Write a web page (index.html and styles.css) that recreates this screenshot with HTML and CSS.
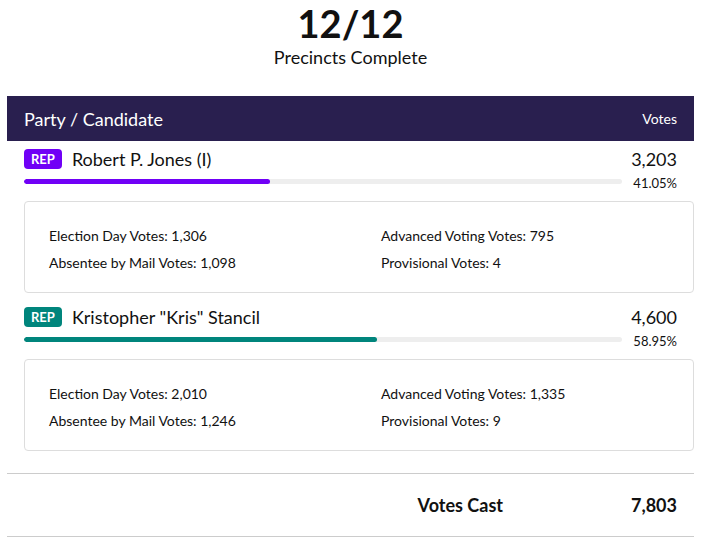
FILE: index.html
```html
<!DOCTYPE html>
<html lang="en">
<head>
    <meta charset="UTF-8">
    <meta name="viewport" content="width=device-width, initial-scale=1.0">
    <title>Election Results</title>
    <link rel="stylesheet" href="styles.css">
</head>
<body>

<div class="results">
    <div class="summary">
        <div class="precincts">12/12</div>
        <div class="precincts-label">Precincts Complete</div>
    </div>

    <div class="table-head">
        <span class="head-title">Party / Candidate</span>
        <span class="head-votes">Votes</span>
    </div>

    <div class="candidate">
        <div class="cand-row">
            <span class="badge badge-purple">REP</span>
            <span class="cand-name">Robert P. Jones (I)</span>
            <span class="cand-votes">3,203</span>
        </div>
        <div class="bar-row">
            <div class="bar"><div class="bar-fill fill-purple" style="width: 41.05%"></div></div>
            <span class="pct">41.05%</span>
        </div>
        <div class="details">
            <span>Election Day Votes: 1,306</span>
            <span>Advanced Voting Votes: 795</span>
            <span>Absentee by Mail Votes: 1,098</span>
            <span>Provisional Votes: 4</span>
        </div>
    </div>

    <div class="candidate">
        <div class="cand-row">
            <span class="badge badge-teal">REP</span>
            <span class="cand-name">Kristopher "Kris" Stancil</span>
            <span class="cand-votes">4,600</span>
        </div>
        <div class="bar-row">
            <div class="bar"><div class="bar-fill fill-teal" style="width: 58.95%"></div></div>
            <span class="pct">58.95%</span>
        </div>
        <div class="details">
            <span>Election Day Votes: 2,010</span>
            <span>Advanced Voting Votes: 1,335</span>
            <span>Absentee by Mail Votes: 1,246</span>
            <span>Provisional Votes: 9</span>
        </div>
    </div>

    <div class="total">
        <span class="total-label">Votes Cast</span>
        <span class="total-value">7,803</span>
    </div>
</div>

</body>
</html>
```

FILE: styles.css
```css
body {
    font-family: 'Lato', 'Open Sans', sans-serif;
    margin: 0;
    padding: 0 7px;
    color: #111;
    background: #fff;
}
.results {
    width: 687px;
}
.summary {
    text-align: center;
    margin-bottom: 28px;
}
.precincts {
    font-size: 38px;
    font-weight: bold;
    line-height: 46px;
}
.precincts-label {
    font-size: 18px;
    line-height: 22px;
}
.table-head {
    background-color: #291f4f;
    color: #fff;
    height: 45px;
    display: flex;
    align-items: center;
    justify-content: space-between;
    padding: 0 17px;
}
.head-title {
    font-size: 18px;
}
.head-votes {
    font-size: 14px;
}
.candidate {
    padding: 7px 0 6px 17px;
}
.cand-row {
    display: flex;
    align-items: center;
    height: 22px;
    padding-right: 17px;
}
.badge {
    color: #fff;
    font-size: 13px;
    font-weight: bold;
    border-radius: 4px;
    padding: 1px 7px;
    line-height: 18px;
    margin-right: 10px;
}
.badge-purple {
    background-color: #7000f6;
}
.badge-teal {
    background-color: #00857c;
}
.cand-name {
    font-size: 18px;
    line-height: 22px;
    flex: 1;
}
.cand-votes {
    font-size: 18px;
    line-height: 22px;
}
.bar-row {
    display: flex;
    align-items: flex-start;
    margin-top: 5px;
    padding-right: 17px;
}
.bar {
    flex: 1;
    height: 5px;
    margin-top: 4px;
    background-color: #eee;
    border-radius: 3px;
    margin-right: 11px;
    overflow: hidden;
}
.bar-fill {
    height: 100%;
    border-radius: 3px;
}
.fill-purple {
    background-color: #7000f6;
}
.fill-teal {
    background-color: #00857c;
}
.pct {
    font-size: 13px;
    line-height: 16px;
}
.details {
    margin-top: 10px;
    border: 1px solid #ddd;
    border-radius: 4px;
    padding: 25px 24px 21px;
    display: grid;
    grid-template-columns: 332px 1fr;
    row-gap: 10px;
    font-size: 14px;
    line-height: 17px;
}
.total {
    margin-top: 16px;
    border-top: 1px solid #ccc;
    border-bottom: 1px solid #ccc;
    height: 62px;
    display: flex;
    align-items: center;
    justify-content: flex-end;
    padding-right: 17px;
    font-weight: bold;
    font-size: 18px;
}
.total-label {
    margin-right: 128px;
}
```
